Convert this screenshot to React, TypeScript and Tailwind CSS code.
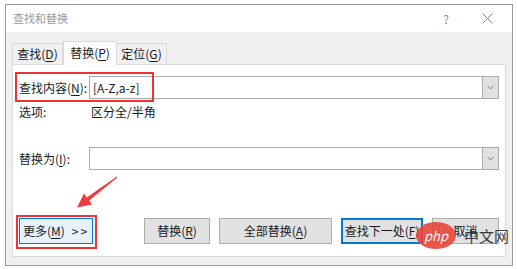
import { ChevronDown } from "lucide-react";

const font = "font-['Noto_Sans_CJK_SC','Noto_Sans',sans-serif]";

function Combo({ value }: { value?: string }) {
  return (
    <div className="flex h-[23px] flex-1 border border-[#acacac] bg-white">
      <div className="flex flex-1 items-center pl-[3px] text-[12px] leading-none text-[#1a1a1a]">{value}</div>
      <div className="flex w-[16px] items-center justify-center border-l border-[#acacac] bg-[#e1e1e1]">
        <ChevronDown className="h-[11px] w-[11px] text-[#505050]" strokeWidth={1.5} />
      </div>
    </div>
  );
}

function Btn({ children, w, blue }: { children: React.ReactNode; w: string; blue?: boolean }) {
  return (
    <div
      className={`flex h-[26px] items-center justify-center text-[12px] leading-none text-[#1a1a1a] ${w} ${
        blue ? "border-2 border-[#0078d7] bg-[#e1e1e1]" : "border border-[#adadad] bg-[#e1e1e1]"
      }`}
    >
      {children}
    </div>
  );
}

const U = ({ c }: { c: string }) => <span className="underline underline-offset-2">{c}</span>;

export default function App() {
  return (
    <div className={`relative h-[269px] w-[517px] overflow-hidden bg-white pl-[5px] pt-[4px] ${font}`}>
      <div className="flex h-[262px] w-[508px] flex-col border border-[#9a9a9a]">
        {/* title bar */}
        <div className="flex h-[27px] items-center bg-white pl-[7px] pr-[12px]">
          <span className="text-[11px] leading-none text-[#9a9a9a]">查找和替换</span>
          <span className="ml-auto text-[12px] leading-none text-[#8a8a8a]">?</span>
          <svg className="ml-[33px] mr-[7px]" width="11" height="11" viewBox="0 0 11 11">
            <path d="M0.5 0.5L10.5 10.5M10.5 0.5L0.5 10.5" stroke="#8a8a8a" strokeWidth="1" />
          </svg>
        </div>

        {/* body */}
        <div className="flex flex-1 flex-col bg-[#f0f0f0] px-[6px] pt-[9px] pb-[8px]">
          <div className="flex h-[23px] items-end">
            <div className="flex h-[21px] w-[51px] items-center justify-center border border-b-0 border-[#d9d9d9] bg-[#f0f0f0] text-[12px] leading-none text-[#1a1a1a]">
              查找(<U c="D" />)
            </div>
            <div className="relative z-10 -mb-px flex h-[24px] w-[54px] items-center justify-center border border-b-0 border-[#d9d9d9] bg-white pb-[2px] text-[12px] leading-none text-[#1a1a1a]">
              替换(<U c="P" />)
            </div>
            <div className="flex h-[21px] w-[50px] items-center justify-center border border-b-0 border-l-0 border-[#d9d9d9] bg-[#f0f0f0] text-[12px] leading-none text-[#1a1a1a]">
              定位(<U c="G" />)
            </div>
          </div>

          <div className="relative flex flex-1 flex-col border border-[#d9d9d9] bg-white px-[6px] pt-[11px]">
            <div className="flex h-[23px] items-center">
              <div className="w-[70px] text-[12px] leading-none text-[#1a1a1a]">
                查找内容(<U c="N" />):
              </div>
              <Combo value="[A-Z,a-z]" />
            </div>
            <div className="mt-[5px] flex h-[16px] items-center text-[12px] leading-none text-[#1a1a1a]">
              <div className="w-[72px]">选项:</div>
              <div>区分全/半角</div>
            </div>
            <div className="mt-[27px] flex h-[23px] items-center">
              <div className="w-[70px] text-[12px] leading-none text-[#1a1a1a]">
                替换为(<U c="I" />):
              </div>
              <Combo />
            </div>
            <div className="mt-[48px] flex items-center">
              <div className="flex h-[26px] w-[74px] items-center justify-center border border-[#0078d7] bg-[#e5f1fb] text-[12px] leading-none text-[#1a1a1a]">
                更多(<U c="M" />)
                <span className="ml-[7px] tracking-[2px]">&gt;&gt;</span>
              </div>
              <div className="ml-auto flex gap-[9px]">
                <Btn w="w-[66px]">
                  替换(<U c="R" />)
                </Btn>
                <Btn w="w-[113px]">
                  全部替换(<U c="A" />)
                </Btn>
                <Btn w="w-[82px]" blue>
                  查找下一处(<U c="F" />)
                </Btn>
                <Btn w="w-[67px]">取消</Btn>
              </div>
            </div>
          </div>
        </div>
      </div>

      {/* red annotation boxes */}
      <div className="absolute left-[15px] top-[72px] h-[30px] w-[139px] border-2 border-[#f03232]" />
      <div className="absolute left-[16px] top-[215px] h-[34px] w-[81px] border-2 border-[#f03232]" />

      {/* red arrow */}
      <svg className="absolute left-0 top-0" width="517" height="269" viewBox="0 0 517 269">
        <polygon
          points="77,207.5 84,193.4 86.8,197.4 116.7,176.6 117.3,177.4 89.2,200.6 92.2,204.6"
          fill="#f03c3c"
        />
      </svg>

      {/* watermark */}
      <div className="absolute left-[416px] top-[222px] flex items-center opacity-90">
        <div className="flex h-[27px] w-[40px] items-center justify-center rounded-[50%] bg-[#e8463a] text-[13px] italic leading-none text-white">
          php
        </div>
        <span className="ml-[8px] text-[15px] leading-none text-[#2a2a2a]">中文网</span>
      </div>
    </div>
  );
}
